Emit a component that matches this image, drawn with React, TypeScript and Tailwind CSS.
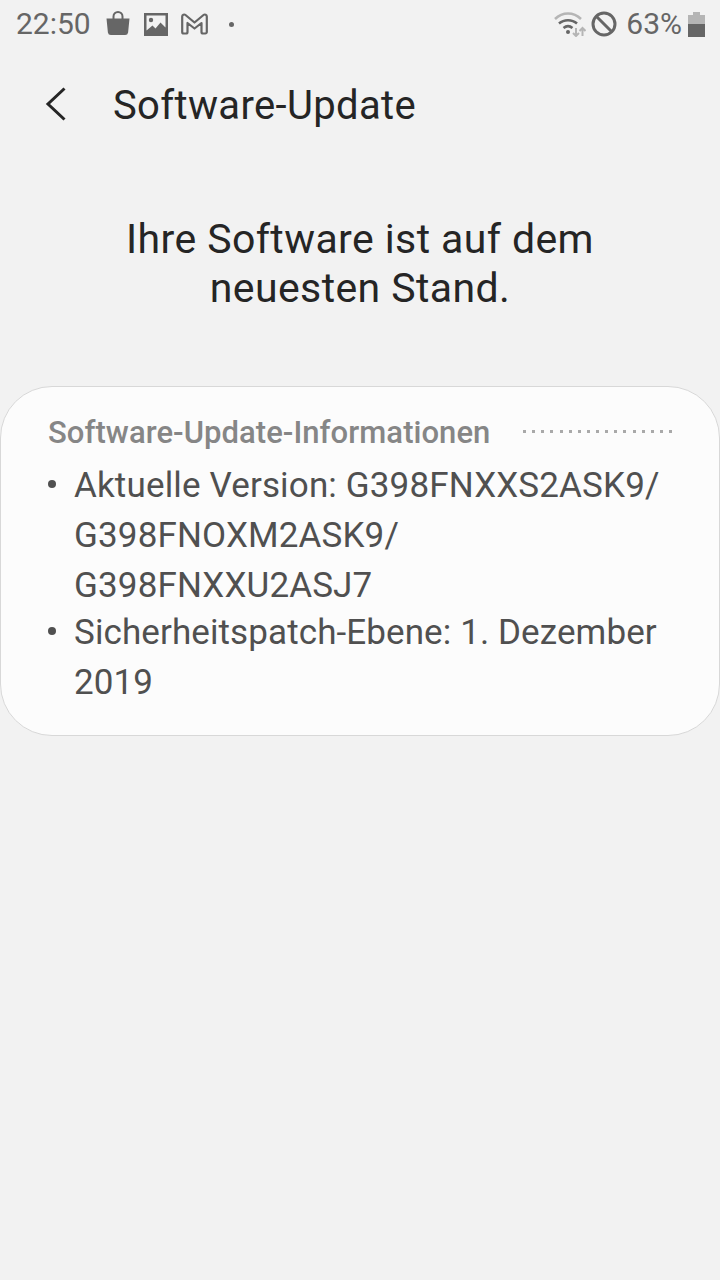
export default function App() {
  return (
    <div className="w-[720px] h-[1280px] bg-[#f2f2f2] overflow-hidden font-['Roboto',sans-serif] flex flex-col">
      {/* status bar */}
      <div className="h-[48px] flex items-center justify-between pl-[16px] pr-[15px] text-[#666666]">
        <div className="flex items-center">
          <span className="text-[30px] leading-[48px]">22:50</span>
          <svg className="ml-[15px] mb-[2px]" width="24" height="26" viewBox="0 0 24 26" fill="#666666">
            <path d="M0.500 8.500h23l-1.400 14a3 3 0 0 1-3 2.500H4.900a3 3 0 0 1-3-2.500z" />
            <path d="M7.500 10V6.500a4.500 4.500 0 0 1 9 0V10" fill="none" stroke="#666666" strokeWidth="2" />
          </svg>
          <svg className="ml-[14px]" width="24" height="23" viewBox="0 0 24 23">
            <path fillRule="evenodd" fill="#666666" d="M0 0h24v23H0zM2.500 2.500v15l6-5 3 3 5-6 5 5V2.500z" />
            <circle cx="7" cy="7" r="2.200" fill="#666666" />
          </svg>
          <svg className="ml-[13px]" width="27" height="22" viewBox="0 0 27 22" fill="none" stroke="#666666" strokeWidth="2.200" strokeLinejoin="round">
            <path d="M1.200 19V3.500A2 2 0 0 1 4.500 2L13.500 9.500 22.500 2A2 2 0 0 1 25.800 3.500V19a1.500 1.500 0 0 1-1.500 1.500H22a1.500 1.500 0 0 1-1.500-1.500V10L13.500 15.500 6.500 10V19A1.500 1.500 0 0 1 5 20.500H2.700A1.500 1.500 0 0 1 1.200 19z" />
          </svg>
          <span className="ml-[21px] w-[5px] h-[5px] rounded-full bg-[#666666]" />
        </div>
        <div className="flex items-center">
          <svg width="32" height="26" viewBox="0 0 32 26" fill="none">
            <path d="M1 8C8.500 0.500 19.500 0.500 27 8" stroke="#b5b5b5" strokeWidth="2.500" />
            <path d="M5 12.500C10 8 18 8 23 12.500" stroke="#666666" strokeWidth="2.500" />
            <path d="M9.500 17C12.500 14.500 15.500 14.500 18.500 17" stroke="#666666" strokeWidth="2.500" />
            <circle cx="14" cy="21" r="2" fill="#666666" />
            <path d="M22 17v8M19 22l3 3 3-3" stroke="#b5b5b5" strokeWidth="2" />
            <path d="M28.500 25v-8M25.500 20l3-3 3 3" stroke="#b5b5b5" strokeWidth="2" />
          </svg>
          <svg className="ml-[5px]" width="26" height="26" viewBox="0 0 26 26" fill="none" stroke="#666666" strokeWidth="3">
            <circle cx="13" cy="13" r="11" />
            <path d="M5.500 5.500L20.500 20.500" />
          </svg>
          <span className="ml-[9px] text-[30px] leading-[48px]">63%</span>
          <svg className="ml-[6px]" width="17" height="25" viewBox="0 0 17 25">
            <path d="M5 0h7v3h5v9H0V3h5z" fill="#b5b5b5" />
            <rect x="0" y="12" width="17" height="13" fill="#666666" />
          </svg>
        </div>
      </div>
      {/* header */}
      <div className="h-[112px] flex items-center">
        <svg className="ml-[45px]" width="22" height="34" viewBox="0 0 22 34" fill="none" stroke="#252525" strokeWidth="3">
          <path d="M19.500 1.500L3 17l16.500 15.500" />
        </svg>
        <h1 className="ml-[46px] mt-[4px] text-[40px] font-normal leading-[48px] tracking-[0.35px] text-[#252525]">Software-Update</h1>
      </div>
      {/* title */}
      <div className="mt-[55px] text-center text-[41px] leading-[49px] text-[#252525] tracking-[0.4px]">
        <div>Ihre Software ist auf dem</div>
        <div>neuesten Stand.</div>
      </div>
      {/* card */}
      <div className="mt-[73px] h-[350px] bg-[#fcfcfc] border border-[#d8d8d8] rounded-[52px] pl-[47px] pr-[47px] pt-[26px]">
        <div className="flex items-center justify-between h-[40px]">
          <span className="text-[31px] font-medium leading-[40px] tracking-[0.06px] text-[#868686]">Software-Update-Informationen</span>
          <span className="w-[149px] mb-[4px] flex justify-between">
            {Array.from({ length: 17 }).map((_, i) => (
              <span key={i} className="w-[3px] h-[3px] bg-[#a9a9a9]" />
            ))}
          </span>
        </div>
        <ul className="text-[35px] leading-[50px] text-[#505050] mt-[8px]">
          <li className="flex">
            <span className="w-[8px] h-[8px] mt-[19px] rounded-full bg-[#505050] shrink-0" />
            <span className="ml-[18px] tracking-[0.15px]">Aktuelle Version: G398FNXXS2ASK9/<br />G398FNOXM2ASK9/<br />G398FNXXU2ASJ7</span>
          </li>
          <li className="flex mt-[-3px]">
            <span className="w-[8px] h-[8px] mt-[19px] rounded-full bg-[#505050] shrink-0" />
            <span className="ml-[18px] tracking-[0.1px]">Sicherheitspatch-Ebene: 1. Dezember<br />2019</span>
          </li>
        </ul>
      </div>
    </div>
  );
}
